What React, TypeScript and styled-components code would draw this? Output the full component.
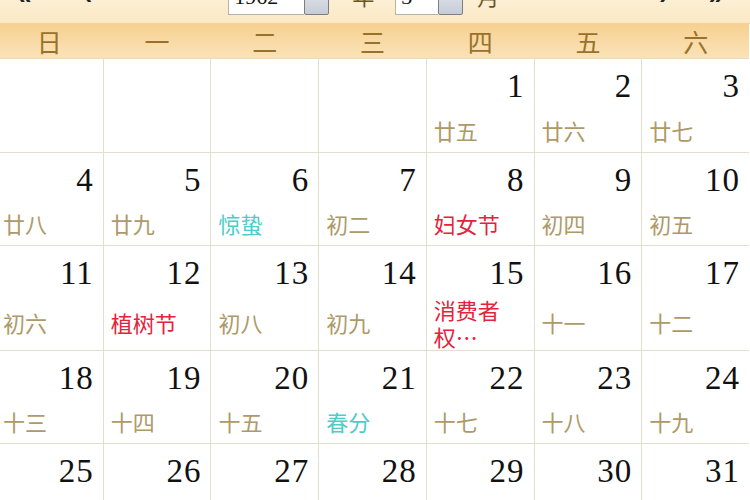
import React from "react";
import styled, { createGlobalStyle } from "styled-components";

const Global = createGlobalStyle`
  html, body { margin: 0; padding: 0; background: #ffffff; overflow: hidden; }
  #root { width: 750px; height: 500px; overflow: hidden; }
`;

const Page = styled.div`
  width: 750px;
  height: 500px;
  overflow: hidden;
  background: #fff;
  font-family: "Noto Sans CJK SC", "Noto Sans", sans-serif;
`;

const TopBar = styled.div`
  height: 41px;
  margin-top: -17px;
  box-sizing: border-box;
  display: flex;
  align-items: flex-start;
  background: linear-gradient(to bottom, #fdf3dd, #fbe9c6);
  border-bottom: 1px solid #eed3a0;
`;

const Arrow = styled.span<{ $ml: number }>`
  margin-left: ${(p) => p.$ml}px;
  margin-top: -1px;
  font-family: "Liberation Sans", sans-serif;
  font-weight: bold;
  font-size: 26px;
  line-height: 26px;
  color: #222;
`;

const InputBox = styled.div<{ $ml: number }>`
  margin-left: ${(p) => p.$ml}px;
  margin-top: 8px;
  height: 24px;
  display: flex;
`;

const Field = styled.div<{ $w: number }>`
  width: ${(p) => p.$w}px;
  height: 24px;
  box-sizing: border-box;
  background: #fff;
  border: 1px solid #b9b2a3;
  border-right: none;
  padding-left: 5px;
  font-family: "Liberation Serif", serif;
  font-size: 22px;
  line-height: 10px;
  color: #111;
  overflow: hidden;
`;

const Spinner = styled.div`
  width: 25px;
  height: 24px;
  box-sizing: border-box;
  border: 1px solid #7d7d7d;
  border-radius: 2px;
  background: linear-gradient(to bottom, #dfe3ea, #c6ccd6);
`;

const BarLabel = styled.span<{ $ml: number }>`
  margin-left: ${(p) => p.$ml}px;
  margin-top: 1px;
  font-size: 22px;
  line-height: 22px;
  color: #6a5526;
`;

const WeekHeader = styled.div`
  height: 34px;
  margin-left: -4px;
  width: 753px;
  display: grid;
  grid-template-columns: repeat(7, 1fr);
  column-gap: 1px;
  background: linear-gradient(to bottom, #f6d18f, #f9dcaa 60%, #fae2b6);
`;

const WeekDay = styled.div`
  display: flex;
  align-items: center;
  justify-content: center;
  font-size: 25px;
  line-height: 34px;
  color: #98722a;
`;

const Grid = styled.div`
  margin-left: -4px;
  width: 753px;
  display: grid;
  grid-template-columns: repeat(7, 1fr);
  grid-template-rows: 93px 92px 104px 92px 93px;
  gap: 1px;
  background: #e3dece;
  border-top: 1px solid #e8dcc0;
`;

const Cell = styled.div`
  background: #fff;
  display: flex;
  flex-direction: column;
  min-width: 0;
`;

const DayNum = styled.div`
  padding: 10px 9px 0 0;
  height: 34px;
  text-align: right;
  font-family: "Liberation Serif", serif;
  font-size: 33px;
  line-height: 34px;
  letter-spacing: 1px;
  color: #111;
`;

const LunarArea = styled.div`
  flex: 1;
  display: flex;
  align-items: center;
  padding: 5px 0 0 7px;
`;

const Lunar = styled.div<{ $kind: "lunar" | "fest" | "term" }>`
  max-width: 80px;
  font-size: 22px;
  line-height: 27px;
  color: ${(p) =>
    p.$kind === "fest" ? "#e4233b" : p.$kind === "term" ? "#4fcbca" : "#ad9a68"};
`;

type Day = { n: number; t: string; k?: "lunar" | "fest" | "term" };

const days: (Day | null)[] = [
  null, null, null, null,
  { n: 1, t: "廿五" }, { n: 2, t: "廿六" }, { n: 3, t: "廿七" },
  { n: 4, t: "廿八" }, { n: 5, t: "廿九" }, { n: 6, t: "惊蛰", k: "term" },
  { n: 7, t: "初二" }, { n: 8, t: "妇女节", k: "fest" }, { n: 9, t: "初四" }, { n: 10, t: "初五" },
  { n: 11, t: "初六" }, { n: 12, t: "植树节", k: "fest" }, { n: 13, t: "初八" }, { n: 14, t: "初九" },
  { n: 15, t: "消费者权…", k: "fest" }, { n: 16, t: "十一" }, { n: 17, t: "十二" },
  { n: 18, t: "十三" }, { n: 19, t: "十四" }, { n: 20, t: "十五" }, { n: 21, t: "春分", k: "term" },
  { n: 22, t: "十七" }, { n: 23, t: "十八" }, { n: 24, t: "十九" },
  { n: 25, t: "二十" }, { n: 26, t: "廿一" }, { n: 27, t: "廿二" }, { n: 28, t: "廿三" },
  { n: 29, t: "廿四" }, { n: 30, t: "廿五" }, { n: 31, t: "廿六" },
];

const weekNames = ["日", "一", "二", "三", "四", "五", "六"];

export default function App() {
  return (
    <Page>
      <Global />
      <TopBar>
        <Arrow $ml={17}>«</Arrow>
        <Arrow $ml={52}>‹</Arrow>
        <InputBox $ml={136}>
          <Field $w={76}>1962</Field>
          <Spinner />
        </InputBox>
        <BarLabel $ml={23}>年</BarLabel>
        <InputBox $ml={21}>
          <Field $w={43}>3</Field>
          <Spinner />
        </InputBox>
        <BarLabel $ml={14}>月</BarLabel>
        <Arrow $ml={160}>›</Arrow>
        <Arrow $ml={41}>»</Arrow>
      </TopBar>
      <WeekHeader>
        {weekNames.map((w) => (
          <WeekDay key={w}>{w}</WeekDay>
        ))}
      </WeekHeader>
      <Grid>
        {days.map((d, i) => (
          <Cell key={i}>
            {d && (
              <>
                <DayNum>{d.n}</DayNum>
                <LunarArea>
                  <Lunar $kind={d.k ?? "lunar"}>{d.t}</Lunar>
                </LunarArea>
              </>
            )}
          </Cell>
        ))}
      </Grid>
    </Page>
  );
}
